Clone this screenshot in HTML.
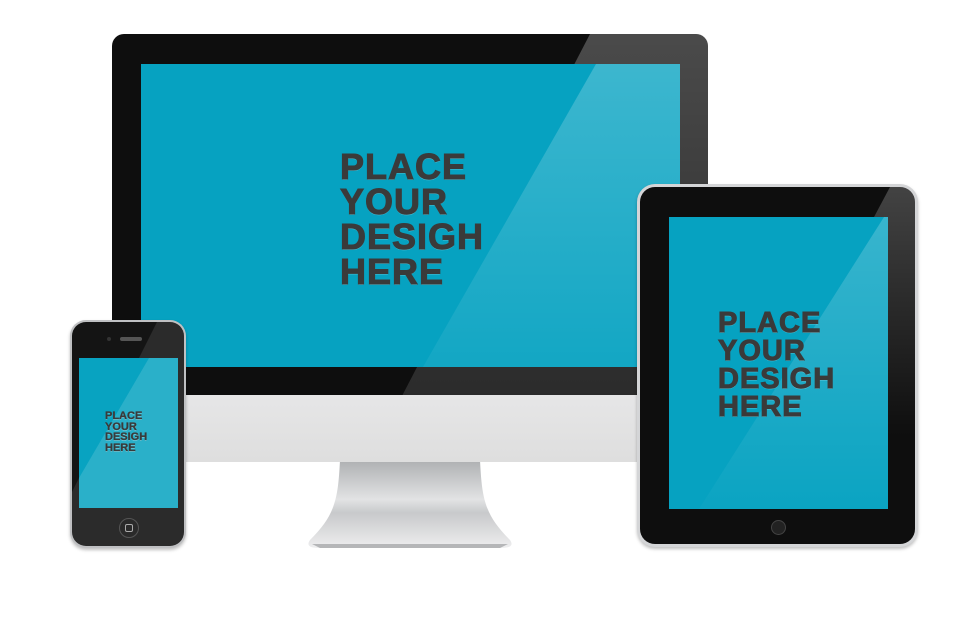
<!DOCTYPE html>
<html><head><style>
body{margin:0;width:980px;height:623px;background:#fff;position:relative;overflow:hidden;font-family:"Liberation Sans",sans-serif}
div{position:absolute;box-sizing:border-box}
.txt{font-weight:bold;color:#3a3a3a;-webkit-text-stroke:1px #3a3a3a;text-shadow:0 1px 0 rgba(255,255,255,.3);white-space:nowrap}
</style></head><body>
<svg style="position:absolute;left:300px;top:460px" width="220" height="92"><defs><linearGradient id="g" x1="0" y1="0" x2="0" y2="1"><stop offset="0" stop-color="#aeb0b2"/><stop offset=".45" stop-color="#e2e3e4"/><stop offset=".6" stop-color="#c8c9cb"/><stop offset="1" stop-color="#eeeeef"/></linearGradient></defs><path d="M40 0 L180 0 C182 40,185 55,210 80 C214 86,210 88,200 88 L20 88 C10 88,6 86,10 80 C35 55,38 40,40 0Z" fill="url(#g)"/><path d="M12 84 L208 84 L200 88 L20 88Z" fill="#b5b6b8"/></svg>
<div style="left:112px;top:34px;width:596px;height:362px;background:#0e0e0e;border-radius:12px 12px 0 0;overflow:hidden">
 <div style="left:0;top:0;width:596px;height:362px;clip-path:polygon(478px 0,596px 0,596px 362px,290px 362px);background:linear-gradient(rgba(255,255,255,.25),rgba(255,255,255,.12))"></div>
</div>
<div style="left:112px;top:395px;width:596px;height:67px;background:linear-gradient(#e6e6e7,#dedede);"></div>
<div style="left:141px;top:64px;width:539px;height:303px;background:#06a2c1;overflow:hidden">
 <div style="left:0;top:0;width:539px;height:303px;clip-path:polygon(455px 0,539px 0,539px 303px,282px 303px);background:linear-gradient(rgba(255,255,255,.22),rgba(255,255,255,.05))"></div>
 <div class="txt" style="left:199px;top:85px;font-size:36px;line-height:35px;letter-spacing:1px">PLACE<br>YOUR<br>DESIGH<br>HERE</div>
</div>
<div style="left:637px;top:184px;width:281px;height:363px;background:#d4d5d7;border-radius:18px;box-shadow:0 2px 3px rgba(0,0,0,.25)"></div>
<div style="left:640px;top:187px;width:275px;height:357px;background:#0e0e0e;border-radius:15px;overflow:hidden">
 <div style="left:0;top:0;width:275px;height:357px;clip-path:polygon(250px 0,275px 0,275px 357px,60px 357px);background:linear-gradient(rgba(255,255,255,.22),rgba(255,255,255,0) 70%)"></div>
</div>
<div style="left:669px;top:217px;width:219px;height:292px;background:#06a2c1;overflow:hidden">
 <div style="left:0;top:0;width:219px;height:292px;clip-path:polygon(215px 0,219px 0,219px 292px,30px 292px);background:linear-gradient(rgba(255,255,255,.2),rgba(255,255,255,.02))"></div>
 <div class="txt" style="left:49px;top:92px;font-size:29px;line-height:28px;letter-spacing:1px">PLACE<br>YOUR<br>DESIGH<br>HERE</div>
</div>
<div style="left:771px;top:520px;width:15px;height:15px;border-radius:50%;background:#222;border:1px solid #444"></div>
<div style="left:70px;top:320px;width:116px;height:228px;background:#bfc0c2;border-radius:16px;box-shadow:0 2px 3px rgba(0,0,0,.25)"></div>
<div style="left:72px;top:322px;width:112px;height:224px;background:#141414;border-radius:14px;overflow:hidden">
 <div style="left:0;top:0;width:112px;height:224px;clip-path:polygon(85px 0,112px 0,112px 224px,0 224px,0 170px);background:rgba(255,255,255,.1)"></div>
</div>
<div style="left:120px;top:337px;width:22px;height:4px;border-radius:2px;background:#555"></div>
<div style="left:107px;top:337px;width:4px;height:4px;border-radius:50%;background:#333"></div>
<div style="left:79px;top:358px;width:99px;height:150px;background:#08a3c1;overflow:hidden">
 <div style="left:0;top:0;width:99px;height:150px;clip-path:polygon(70px 0,99px 0,99px 150px,0 150px,0 120px);background:rgba(255,255,255,.14)"></div>
 <div class="txt" style="left:26px;top:53px;font-size:11px;line-height:10.5px;-webkit-text-stroke:0.3px #3a3a3a">PLACE<br>YOUR<br>DESIGH<br>HERE</div>
</div>
<div style="left:119px;top:518px;width:20px;height:20px;border-radius:50%;background:#2a2a2a;border:1px solid #555"></div>
<div style="left:125px;top:524px;width:8px;height:8px;border:1px solid #aaa;border-radius:2px"></div>
</body></html>
